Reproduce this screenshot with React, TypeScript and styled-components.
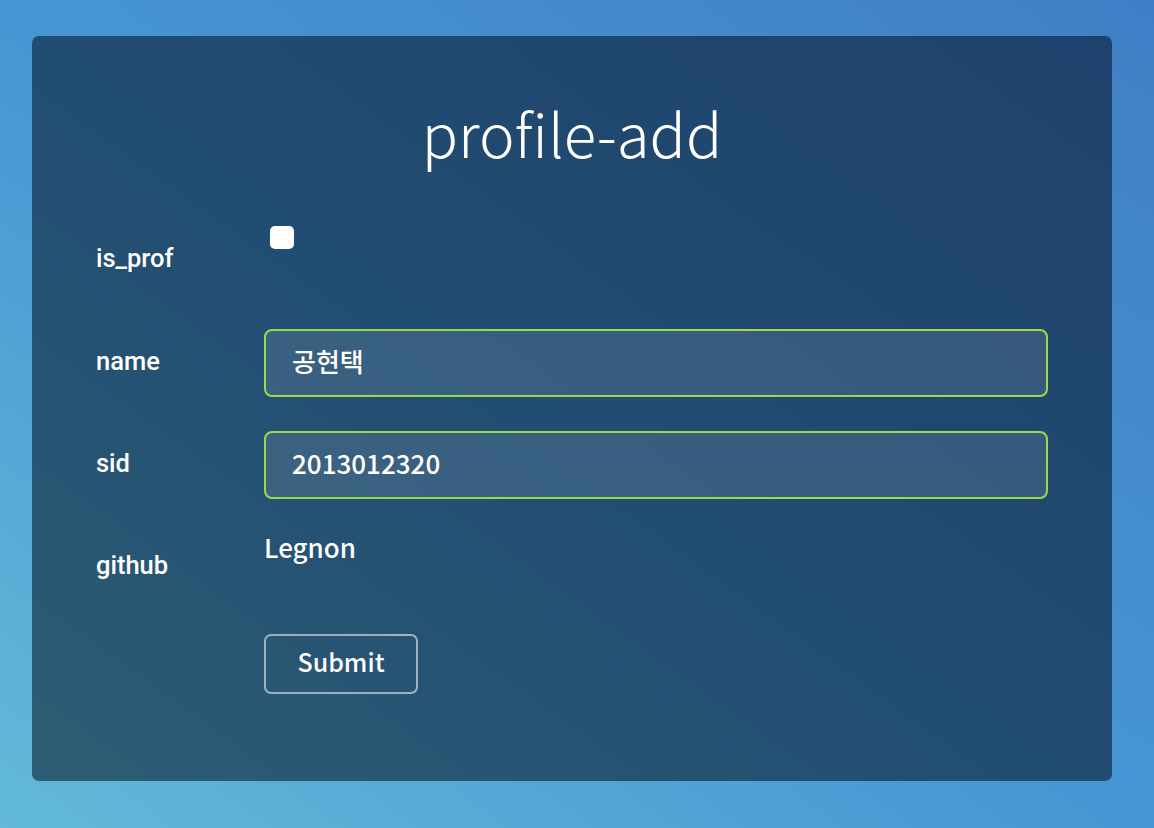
import React from "react";
import styled, { createGlobalStyle } from "styled-components";

const Global = createGlobalStyle`
  html, body { margin: 0; padding: 0; }
  body {
    width: 1154px;
    height: 828px;
    overflow: hidden;
    background: linear-gradient(to top right, #62bad8 0%, #4898d4 45%, #3f7ec6 100%);
    font-family: "Noto Sans CJK KR", "Noto Sans", sans-serif;
  }
`;

const Page = styled.div`
  box-sizing: border-box;
  width: 1154px;
  height: 828px;
  padding: 36px 42px 47px 32px;
  display: flex;
`;

const Card = styled.div`
  box-sizing: border-box;
  flex: 1;
  background: rgba(0, 10, 25, 0.52);
  border-radius: 7px;
  padding: 60px 64px 0 64px;
  color: #fff;
  display: flex;
  flex-direction: column;
`;

const Title = styled.h1`
  margin: 0 0 58px 0;
  font-family: "Noto Sans CJK KR", "Noto Sans", sans-serif;
  font-weight: 300;
  font-size: 60px;
  line-height: 72px;
  text-align: center;
  color: #fff;
`;

const Form = styled.form`
  display: flex;
  flex-direction: column;
  gap: 34px;
`;

const Row = styled.div<{ $h?: number }>`
  display: grid;
  grid-template-columns: 168px 784px;
  min-height: ${(p) => (p.$h ? `${p.$h}px` : "auto")};
  align-items: start;
`;

const Label = styled.label`
  font-family: Roboto, "Liberation Sans", sans-serif;
  font-weight: 500;
  font-size: 25.5px;
  line-height: 28px;
  padding-top: 18px;
  color: #fff;
`;

const Check = styled.input`
  appearance: none;
  -webkit-appearance: none;
  margin: 0 0 0 6px;
  width: 24px;
  height: 23px;
  border-radius: 5px;
  background: #fff;
  border: none;
`;

const TextInput = styled.input`
  box-sizing: border-box;
  width: 784px;
  height: 68px;
  border: 2px solid #9ad94a;
  border-radius: 8px;
  background: rgba(255, 255, 255, 0.1);
  color: #fff;
  font-family: "Noto Sans CJK KR", "Noto Sans", sans-serif;
  font-weight: 500;
  font-size: 26px;
  padding: 0 26px 6px 26px;
  outline: none;
`;

const Value = styled.div`
  font-family: "Noto Sans CJK KR", "Noto Sans", sans-serif;
  font-weight: 500;
  font-size: 26px;
  line-height: 28px;
  color: #fff;
`;

const Button = styled.button`
  box-sizing: border-box;
  width: 154px;
  height: 60px;
  margin-top: 2px;
  border: 2px solid rgba(255, 255, 255, 0.55);
  border-radius: 7px;
  background: transparent;
  color: #fff;
  font-family: "Noto Sans CJK KR", "Noto Sans", sans-serif;
  font-weight: 500;
  font-size: 25px;
  padding: 0 0 7px 0;
  cursor: pointer;
`;

const Spacer = styled.div``;

export default function App() {
  return (
    <>
      <Global />
      <Page>
        <Card>
          <Title>profile-add</Title>
          <Form onSubmit={(e) => e.preventDefault()}>
            <Row $h={69}>
              <Label>is_prof</Label>
              <div>
                <Check type="checkbox" />
              </div>
            </Row>
            <Row>
              <Label>name</Label>
              <TextInput defaultValue="공현택" />
            </Row>
            <Row>
              <Label>sid</Label>
              <TextInput defaultValue="2013012320" />
            </Row>
            <Row $h={65}>
              <Label>github</Label>
              <Value>Legnon</Value>
            </Row>
            <Row>
              <Spacer />
              <div>
                <Button type="submit">Submit</Button>
              </div>
            </Row>
          </Form>
        </Card>
      </Page>
    </>
  );
}
